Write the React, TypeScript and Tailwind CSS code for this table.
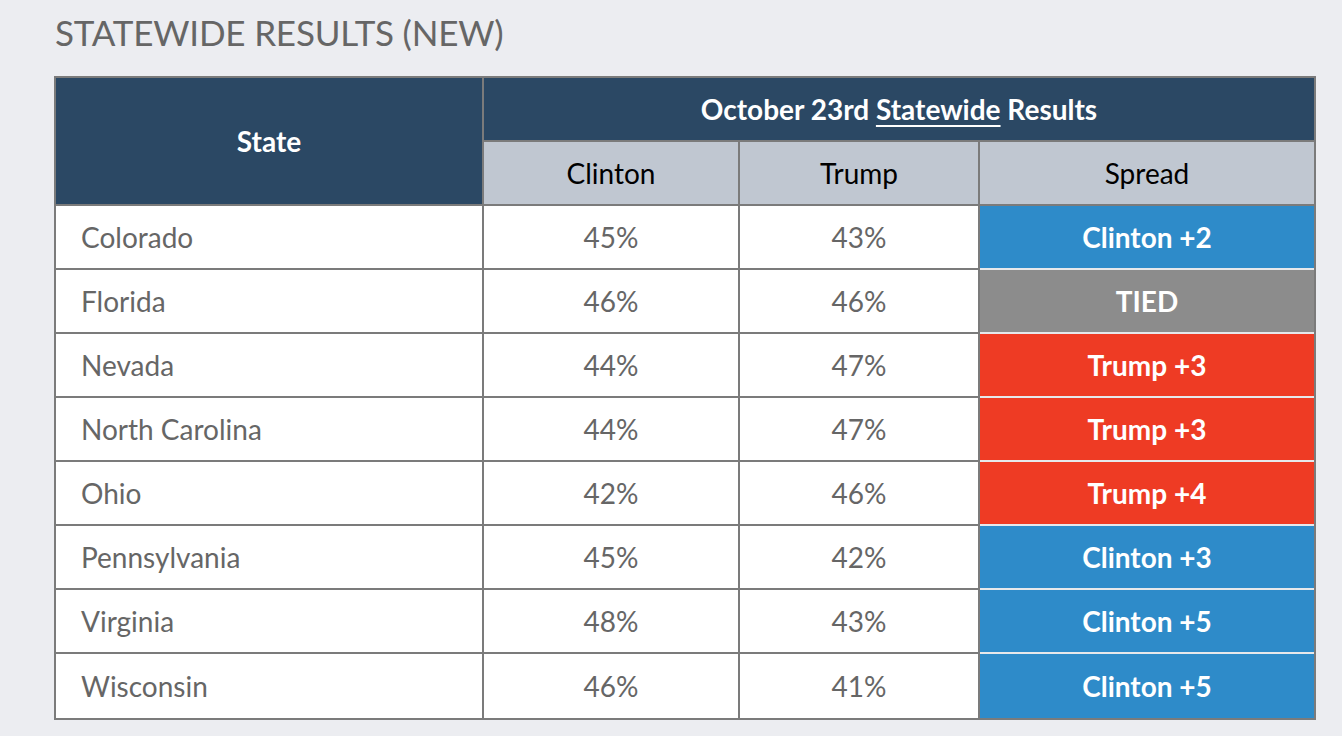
import React from 'react';

type Row = {
  state: string;
  clinton: string;
  trump: string;
  spread: string;
  tone: 'blue' | 'red' | 'tie';
};

const rows: Row[] = [
  { state: 'Colorado', clinton: '45%', trump: '43%', spread: 'Clinton +2', tone: 'blue' },
  { state: 'Florida', clinton: '46%', trump: '46%', spread: 'TIED', tone: 'tie' },
  { state: 'Nevada', clinton: '44%', trump: '47%', spread: 'Trump +3', tone: 'red' },
  { state: 'North Carolina', clinton: '44%', trump: '47%', spread: 'Trump +3', tone: 'red' },
  { state: 'Ohio', clinton: '42%', trump: '46%', spread: 'Trump +4', tone: 'red' },
  { state: 'Pennsylvania', clinton: '45%', trump: '42%', spread: 'Clinton +3', tone: 'blue' },
  { state: 'Virginia', clinton: '48%', trump: '43%', spread: 'Clinton +5', tone: 'blue' },
  { state: 'Wisconsin', clinton: '46%', trump: '41%', spread: 'Clinton +5', tone: 'blue' },
];

const toneBg = {
  blue: 'bg-[#2e8bc9]',
  red: 'bg-[#ee3b24]',
  tie: 'bg-[#8c8c8c]',
};

const App: React.FC = () => {
  return (
    <div className="min-h-screen bg-[#ecedf1] font-['Lato','Liberation_Sans',sans-serif]">
      <div className="pl-[54px] pt-[9px]">
        <h2 className="pl-[1px] text-[35px] leading-[46px] text-[#666666] uppercase tracking-[-0.2px]">
          Statewide Results (New)
        </h2>

        <div className="mt-[21px] w-[1262px] border-2 border-[#7b7b7b] bg-white text-[28px]">
          {/* header */}
          <div className="flex">
            <div className="w-[428px] h-[128px] border-r-2 border-b-2 border-[#7b7b7b] bg-[#2b4864] flex items-center justify-center text-white font-bold">
              State
            </div>
            <div className="flex-1 flex flex-col">
              <div className="h-[64px] border-b-2 border-[#7b7b7b] bg-[#2b4864] flex items-center justify-center text-white font-bold">
                <span>
                  October 23rd <span className="underline underline-offset-[5px] decoration-2">Statewide</span> Results
                </span>
              </div>
              <div className="h-[64px] border-b-2 border-[#7b7b7b] bg-[#c0c7d1] flex text-black">
                <div className="w-[256px] border-r-2 border-[#7b7b7b] flex items-center justify-center">Clinton</div>
                <div className="w-[240px] border-r-2 border-[#7b7b7b] flex items-center justify-center">Trump</div>
                <div className="flex-1 flex items-center justify-center">Spread</div>
              </div>
            </div>
          </div>

          {/* body */}
          {rows.map((r, i) => {
            const last = i === rows.length - 1;
            const b = last ? '' : 'border-b-2';
            return (
              <div key={r.state} className="flex h-[64px] text-[#666666]">
                <div className={`w-[428px] border-r-2 ${b} border-[#7b7b7b] flex items-center pl-[25px]`}>
                  {r.state}
                </div>
                <div className={`w-[256px] border-r-2 ${b} border-[#7b7b7b] flex items-center justify-center`}>
                  {r.clinton}
                </div>
                <div className={`w-[240px] border-r-2 ${b} border-[#7b7b7b] flex items-center justify-center`}>
                  {r.trump}
                </div>
                <div
                  className={`flex-1 ${b} border-[#e6e8eb] ${toneBg[r.tone]} flex items-center justify-center text-white font-bold`}
                >
                  {r.spread}
                </div>
              </div>
            );
          })}
        </div>
      </div>
    </div>
  );
};

export default App;
